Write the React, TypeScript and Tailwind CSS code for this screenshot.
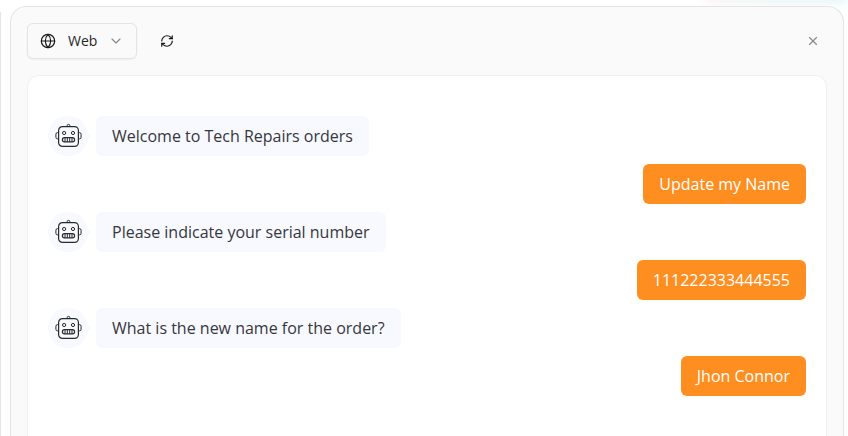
import { ChevronDown, Globe, RefreshCw, X } from "lucide-react";

type Message = { from: "bot" | "user"; text: string };

const messages: Message[] = [
  { from: "bot", text: "Welcome to Tech Repairs orders" },
  { from: "user", text: "Update my Name" },
  { from: "bot", text: "Please indicate your serial number" },
  { from: "user", text: "111222333444555" },
  { from: "bot", text: "What is the new name for the order?" },
  { from: "user", text: "Jhon Connor" },
];

function RobotAvatar() {
  return (
    <div className="relative flex size-10 shrink-0 items-center justify-center rounded-full bg-[#f8f9ff]">
      <svg
        className="size-7"
        viewBox="0 0 28 28"
        fill="none"
        stroke="#292b32"
        strokeWidth="1.2"
        aria-hidden="true"
      >
        <rect x="4.6" y="4.6" width="19.8" height="19.8" rx="3.8" />
        <path d="M13.1 4.5v-.7a1.4 1.4 0 0 1 2.8 0v.7" strokeWidth="1" />
        <path d="M4.5 10.6h-.9a1.7 1.7 0 0 0-1.7 1.7v2.9a1.7 1.7 0 0 0 1.7 1.7h.9" strokeWidth="1" />
        <path d="M24.5 10.6h.9a1.7 1.7 0 0 1 1.7 1.7v2.9a1.7 1.7 0 0 1-1.7 1.7h-.9" strokeWidth="1" />
        <circle cx="10.1" cy="11" r="1.6" strokeWidth="1" />
        <circle cx="19" cy="11" r="1.6" strokeWidth="1" />
        <rect x="8.4" y="15.7" width="12.2" height="4.2" rx="2.1" />
        <path d="M11 16v4M13.3 16v4M15.7 16v4M18 16v4" strokeWidth="1" />
      </svg>
      <svg
        className="absolute top-4 left-9 h-2 w-2"
        viewBox="0 0 8 8"
        aria-hidden="true"
      >
        <path d="M3 0 8 4 3 8Z" fill="#f8f9ff" />
      </svg>
    </div>
  );
}

function MessageRow({ message }: { message: Message }) {
  if (message.from === "user") {
    return (
      <li className="flex justify-end">
        <p className="rounded-md bg-[#ff8e21] px-4 py-2 text-white">{message.text}</p>
      </li>
    );
  }
  return (
    <li className="flex gap-2">
      <RobotAvatar />
      <p className="rounded-md bg-[#f8f9ff] px-4 py-2 text-[#36373c]">{message.text}</p>
    </li>
  );
}

export default function App() {
  return (
    <div className="relative flex h-screen overflow-hidden bg-white pr-1 font-['Open_Sans','Noto_Sans',sans-serif]">
      <div className="mt-3 mr-[9px] w-px shrink-0 bg-[#e4e4e9]" />
      <div className="absolute -top-2 right-0 h-3 w-36 rounded-full bg-linear-to-r from-[#fbf3f4] via-[#e9f6f5] to-[#e6f7f8] blur-xs" />
      <section className="relative mt-1.5 flex min-w-0 flex-1 flex-col rounded-t-2xl border border-b-0 border-[#e4e4e7] bg-[#fafafa] px-4 pt-4">
        <header className="flex items-center">
          <div className="relative">
            <Globe
              className="pointer-events-none absolute top-2.5 left-[13px] size-4 text-[#18181b]"
              strokeWidth={1.75}
            />
            <select
              aria-label="Channel"
              defaultValue="web"
              className="h-9 w-[110px] appearance-none rounded-md border border-[#e4e4e7] bg-[#fafafa] pr-8 pl-10 text-sm text-[#27272a] shadow-xs"
            >
              <option value="web">Web</option>
            </select>
            <ChevronDown
              className="pointer-events-none absolute top-2.5 right-[13px] size-4 text-[#8b8b8f]"
              strokeWidth={1.75}
            />
          </div>
          <button
            type="button"
            aria-label="Restart conversation"
            className="ml-3 flex size-9 items-center justify-center text-[#18181b]"
          >
            <RefreshCw className="size-3.5" strokeWidth={2} />
          </button>
          <button
            type="button"
            aria-label="Close"
            className="ml-auto flex size-7 items-center justify-center text-[#8b8b8f]"
          >
            <X className="size-3.5" strokeWidth={2} />
          </button>
        </header>
        <ul className="mt-4 flex flex-1 flex-col gap-2 rounded-t-xl border border-b-0 border-[#f0f0f1] bg-white px-5 pt-10 text-base leading-6">
          {messages.map((message) => (
            <MessageRow key={message.text} message={message} />
          ))}
        </ul>
      </section>
    </div>
  );
}
